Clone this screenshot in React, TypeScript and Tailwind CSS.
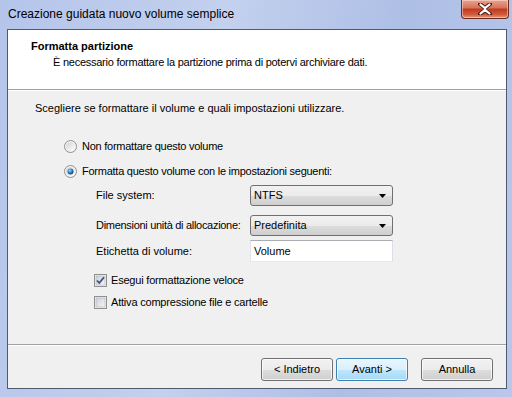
import React from "react";

const font = { fontFamily: '"Liberation Sans", Arial, sans-serif' };

function Radio({ checked }: { checked?: boolean }) {
  return (
    <svg width="13" height="13" viewBox="0 0 13 13" className="shrink-0">
      <defs>
        <linearGradient id={checked ? "rg1" : "rg0"} x1="0" y1="0" x2="1" y2="1">
          <stop offset="0" stopColor="#cfd1d3" />
          <stop offset="1" stopColor="#ffffff" />
        </linearGradient>
        <radialGradient id="dot" cx="0.4" cy="0.35" r="0.7">
          <stop offset="0" stopColor="#a6dcf8" />
          <stop offset="0.5" stopColor="#2f7fc1" />
          <stop offset="1" stopColor="#0e3a6a" />
        </radialGradient>
      </defs>
      <circle cx="6.5" cy="6.5" r="6" fill="#f4f4f4" stroke="#8e8f8f" strokeWidth="1" />
      <circle cx="6.5" cy="6.5" r="4.5" fill={`url(#${checked ? "rg1" : "rg0"})`} />
      {checked && <circle cx="6.5" cy="6.5" r="3" fill="url(#dot)" />}
    </svg>
  );
}

function Check({ checked }: { checked?: boolean }) {
  return (
    <svg width="13" height="13" viewBox="0 0 13 13" className="shrink-0">
      <defs>
        <linearGradient id="cbg" x1="0" y1="0" x2="1" y2="1">
          <stop offset="0" stopColor="#cbcfd5" />
          <stop offset="1" stopColor="#f6f6f6" />
        </linearGradient>
      </defs>
      <rect x="0.5" y="0.5" width="12" height="12" fill="#f4f4f4" stroke="#8e8f8f" />
      <rect x="2" y="2" width="9" height="9" fill="url(#cbg)" stroke="#aeb3b9" strokeWidth="0.6" />
      {checked && (
        <path d="M3 6.5 L5.3 9 L10 3.3" fill="none" stroke="#3a4f8a" strokeWidth="1.8" />
      )}
    </svg>
  );
}

function Select({ value }: { value: string }) {
  return (
    <div className="flex h-[21px] w-[143px] items-center justify-between rounded-[3px] border border-[#707070] bg-[linear-gradient(#f2f2f2_0%,#ebebeb_50%,#dddddd_51%,#cfcfcf_100%)] pl-[3px] pr-[6px] text-[11px] text-black">
      <span>{value}</span>
      <svg width="7" height="4" viewBox="0 0 7 4">
        <path d="M0 0 H7 L3.5 4 Z" fill="#000" />
      </svg>
    </div>
  );
}

function Button({ label, def }: { label: string; def?: boolean }) {
  return (
    <div
      className={
        def
          ? "flex h-[23px] w-[72px] items-center justify-center rounded-[3px] border border-[#3c7fb1] bg-[linear-gradient(#eaf6fd_0%,#d9f0fc_50%,#bee6fd_51%,#a7d9f5_100%)] text-[11px] text-black shadow-[inset_0_0_0_1px_rgba(255,255,255,0.7)]"
          : "flex h-[23px] w-[72px] items-center justify-center rounded-[3px] border border-[#707070] bg-[linear-gradient(#f2f2f2_0%,#ebebeb_50%,#dddddd_51%,#cfcfcf_100%)] text-[11px] text-black shadow-[inset_0_0_0_1px_rgba(255,255,255,0.7)]"
      }
    >
      {label}
    </div>
  );
}

export default function App() {
  return (
    <div
      className="flex h-[397px] w-[512px] flex-col overflow-hidden bg-[linear-gradient(100deg,#b5c5ea_0%,#c3d0ee_40%,#aebfe6_70%,#b8c7ea_100%)]"
      style={font}
    >
      {/* Title bar */}
      <div className="flex h-[29px] shrink-0 items-start justify-between">
        <div className="pl-[8px] pt-[6px] text-[12px] leading-[16px] text-black">
          Creazione guidata nuovo volume semplice
        </div>
        <div className="mr-[3px] flex h-[19px] w-[48px] items-center justify-center rounded-b-[4px] border border-t-0 border-[#6b2a22] bg-[linear-gradient(#e8a493_0%,#d6705a_45%,#c2381c_50%,#cf5b3b_80%,#e79a7c_100%)] shadow-[inset_0_0_0_1px_rgba(255,230,220,0.5)]">
          <svg width="14" height="12" viewBox="0 0 14 12">
            <path
              d="M2 1 L7 5 L12 1 M2 11 L7 7 L12 11"
              fill="none"
              stroke="#4b1a12"
              strokeWidth="4"
              strokeLinecap="round"
            />
            <path
              d="M2.5 1.5 L7 5.2 L11.5 1.5 M2.5 10.5 L7 6.8 L11.5 10.5 M7 5.2 L7 6.8"
              fill="none"
              stroke="#ffffff"
              strokeWidth="2.2"
              strokeLinecap="round"
            />
          </svg>
        </div>
      </div>

      {/* Inner window */}
      <div className="ml-[7px] flex h-[360px] w-[500px] flex-col border border-[#4f5a70] bg-[#f0f0f0]">
        {/* Header */}
        <div className="flex h-[59px] shrink-0 flex-col bg-white">
          <div className="pl-[23px] pt-[9px] text-[11px] font-bold leading-[14px] text-black">
            Formatta partizione
          </div>
          <div className="pl-[45px] pt-[2px] text-[11px] leading-[14px] tracking-[-0.25px] text-black">
            È necessario formattare la partizione prima di potervi archiviare dati.
          </div>
        </div>
        <div className="h-px shrink-0 bg-[#a0a0a0]" />
        <div className="h-px shrink-0 bg-white" />

        {/* Content */}
        <div className="flex h-[253px] shrink-0 flex-col whitespace-nowrap text-[11px] text-black">
          <div className="ml-[27px] mt-[10px] h-[14px] leading-[14px]">
            Scegliere se formattare il volume e quali impostazioni utilizzare.
          </div>
          <div className="ml-[56px] mt-[23px] flex h-[16px] items-center gap-[5px] tracking-[-0.25px]">
            <Radio />
            <span>Non formattare questo volume</span>
          </div>
          <div className="ml-[56px] mt-[9px] flex h-[16px] items-center gap-[5px] tracking-[-0.25px]">
            <Radio checked />
            <span>Formatta questo volume con le impostazioni seguenti:</span>
          </div>
          <div className="ml-[88px] mt-[6px] flex h-[21px] items-center">
            <span className="w-[154px]">File system:</span>
            <Select value="NTFS" />
          </div>
          <div className="ml-[88px] mt-[9px] flex h-[21px] items-center">
            <span className="w-[154px] tracking-[-0.3px]">Dimensioni unità di allocazione:</span>
            <Select value="Predefinita" />
          </div>
          <div className="ml-[88px] mt-[4px] flex h-[22px] items-center">
            <span className="w-[154px]">Etichetta di volume:</span>
            <div className="flex h-[22px] w-[143px] items-center border border-[#abadb3] border-b-[#e3e9ef] border-l-[#e2e3ea] border-r-[#dbdfe6] bg-white pl-[3px]">
              Volume
            </div>
          </div>
          <div className="ml-[86px] mt-[10px] flex h-[16px] items-center gap-[4px] tracking-[-0.2px]">
            <Check checked />
            <span>Esegui formattazione veloce</span>
          </div>
          <div className="ml-[86px] mt-[6px] flex h-[16px] items-center gap-[4px] tracking-[-0.2px]">
            <Check />
            <span>Attiva compressione file e cartelle</span>
          </div>
        </div>

        <div className="h-px shrink-0 bg-[#a0a0a0]" />
        <div className="h-px shrink-0 bg-white" />

        {/* Buttons */}
        <div className="flex flex-1 items-start justify-end pr-[13px] pt-[12px]">
          <Button label="< Indietro" />
          <div className="w-[3px]" />
          <Button label="Avanti >" def />
          <div className="w-[13px]" />
          <Button label="Annulla" />
        </div>
      </div>
    </div>
  );
}
